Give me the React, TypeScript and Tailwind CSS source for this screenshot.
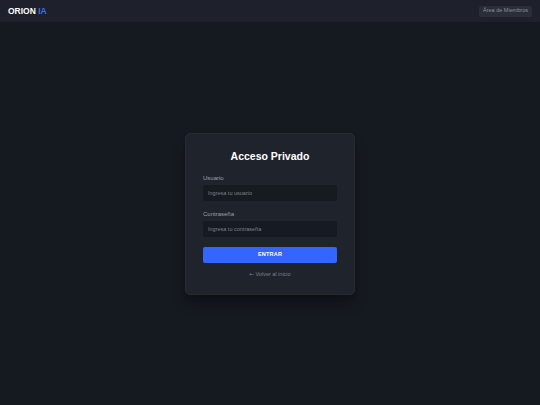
import React from "react";

export default function App() {
  const font = { fontFamily: "'Liberation Sans', Arial, sans-serif" };
  return (
    <div className="flex h-[405px] w-[540px] flex-col bg-[#151920] text-white" style={font}>
      <header className="flex h-[22px] shrink-0 items-center justify-between bg-[#1e212b] px-2">
        <div className="text-[8.5px] font-bold leading-none">
          ORION <span className="text-[#3b6cff]">IA</span>
        </div>
        <button
          type="button"
          className="flex h-[11px] items-center rounded-[2px] bg-[#2a2e39] px-[4px] text-[5.5px] leading-none text-[#8a8f9b]"
        >
          Área de Miembros
        </button>
      </header>

      <main className="flex flex-1 items-center justify-center">
        <div className="w-[170px] rounded-[5px] border border-[#262a34] bg-[#1f232c] px-[17px] pb-[16px] pt-[15px] shadow-lg shadow-black/30">
          <h2 className="text-center text-[10.5px] font-bold leading-[14px]">Acceso Privado</h2>

          <div className="mt-[11px]">
            <label className="block text-[6px] leading-[8px] text-[#9aa0ab]">Usuario</label>
            <input
              placeholder="Ingresa tu usuario"
              className="mt-[3px] block h-[16px] w-full rounded-[2px] bg-[#161a21] px-[5px] text-[5.5px] text-white outline-none placeholder:text-[#7d828d]"
            />
          </div>

          <div className="mt-[9px]">
            <label className="block text-[6px] leading-[8px] text-[#9aa0ab]">Contraseña</label>
            <input
              type="password"
              placeholder="Ingresa tu contraseña"
              className="mt-[3px] block h-[16px] w-full rounded-[2px] bg-[#161a21] px-[5px] text-[5.5px] text-white outline-none placeholder:text-[#7d828d]"
            />
          </div>

          <button
            type="button"
            className="mt-[10px] flex h-[16px] w-full items-center justify-center rounded-[2px] bg-[#3366ff] text-[5.5px] font-bold tracking-[0.2px] text-white"
          >
            ENTRAR
          </button>

          <div className="mt-[7px] text-center text-[5.5px] leading-[8px] text-[#7d828d]">
            <span style={{ fontFamily: "'DejaVu Sans', sans-serif" }}>←</span> Volver al inicio
          </div>
        </div>
      </main>
    </div>
  );
}
